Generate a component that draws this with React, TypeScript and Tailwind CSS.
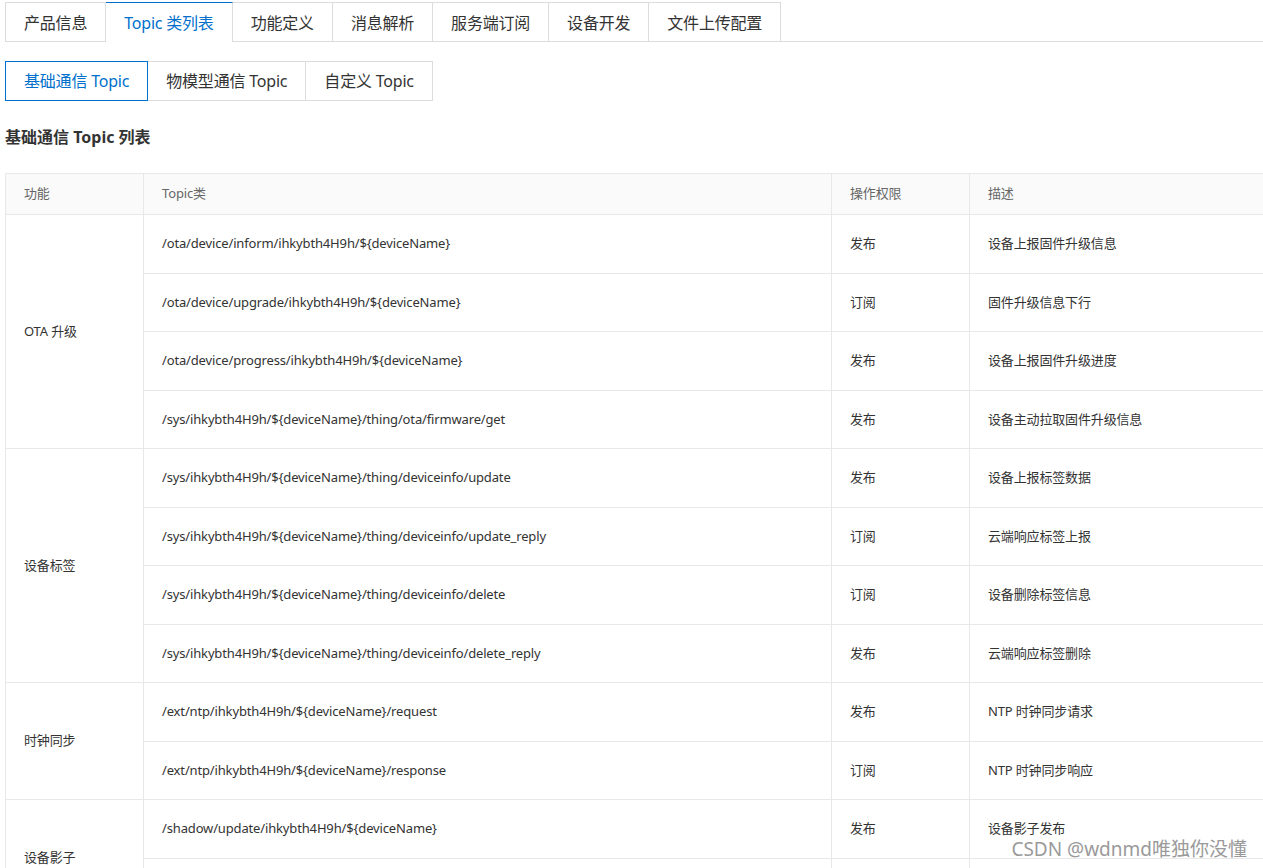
import React from 'react';

const topTabs = ['产品信息', 'Topic 类列表', '功能定义', '消息解析', '服务端订阅', '设备开发', '文件上传配置'];
const subTabs = ['基础通信 Topic', '物模型通信 Topic', '自定义 Topic'];

interface TopicRow {
  topic: string;
  perm: string;
  desc: string;
}

interface TopicGroup {
  name: string;
  rows: TopicRow[];
}

const groups: TopicGroup[] = [
  {
    name: 'OTA 升级',
    rows: [
      { topic: '/ota/device/inform/ihkybth4H9h/${deviceName}', perm: '发布', desc: '设备上报固件升级信息' },
      { topic: '/ota/device/upgrade/ihkybth4H9h/${deviceName}', perm: '订阅', desc: '固件升级信息下行' },
      { topic: '/ota/device/progress/ihkybth4H9h/${deviceName}', perm: '发布', desc: '设备上报固件升级进度' },
      { topic: '/sys/ihkybth4H9h/${deviceName}/thing/ota/firmware/get', perm: '发布', desc: '设备主动拉取固件升级信息' },
    ],
  },
  {
    name: '设备标签',
    rows: [
      { topic: '/sys/ihkybth4H9h/${deviceName}/thing/deviceinfo/update', perm: '发布', desc: '设备上报标签数据' },
      { topic: '/sys/ihkybth4H9h/${deviceName}/thing/deviceinfo/update_reply', perm: '订阅', desc: '云端响应标签上报' },
      { topic: '/sys/ihkybth4H9h/${deviceName}/thing/deviceinfo/delete', perm: '订阅', desc: '设备删除标签信息' },
      { topic: '/sys/ihkybth4H9h/${deviceName}/thing/deviceinfo/delete_reply', perm: '发布', desc: '云端响应标签删除' },
    ],
  },
  {
    name: '时钟同步',
    rows: [
      { topic: '/ext/ntp/ihkybth4H9h/${deviceName}/request', perm: '发布', desc: 'NTP 时钟同步请求' },
      { topic: '/ext/ntp/ihkybth4H9h/${deviceName}/response', perm: '订阅', desc: 'NTP 时钟同步响应' },
    ],
  },
  {
    name: '设备影子',
    rows: [
      { topic: '/shadow/update/ihkybth4H9h/${deviceName}', perm: '发布', desc: '设备影子发布' },
      { topic: '/shadow/get/ihkybth4H9h/${deviceName}', perm: '订阅', desc: '设备影子订阅' },
    ],
  },
];

const App: React.FC = () => {
  return (
    <div
      className="relative min-h-[868px] overflow-hidden bg-white pt-[2px] pl-[5px] text-[#333]"
      style={{ fontFamily: '"Noto Sans", "Noto Sans CJK SC", sans-serif' }}
    >
      {/* Top tabs */}
      <div className="flex border-b border-[#dcdcdc]">
        {topTabs.map((tab, i) => (
          <div
            key={tab}
            className={`-mb-px flex h-[40px] items-center border-r border-t px-[18px] text-[16px] tracking-[-0.2px] ${
              i === 0 ? 'border-l' : ''
            } ${
              i === 1
                ? 'border-r-[#dcdcdc] border-t-[#0070cc] border-l-[#dcdcdc] bg-white text-[#0070cc]'
                : 'border-[#dcdcdc] text-[#333]'
            }`}
          >
            {tab}
          </div>
        ))}
      </div>

      {/* Sub tabs */}
      <div className="mt-[19px] flex">
        {subTabs.map((tab, i) => (
          <div
            key={tab}
            className={`flex h-[40px] items-center border px-[18px] text-[16px] tracking-[-0.2px] ${
              i === 0 ? 'border-[#0070cc] text-[#0070cc]' : 'border-[#dcdcdc] border-l-0 text-[#333]'
            }`}
          >
            {tab}
          </div>
        ))}
      </div>

      <h2 className="mt-[25px] text-[16px] leading-[22px] font-bold text-[#333]">基础通信 Topic 列表</h2>

      {/* Table */}
      <table className="mt-[25px] w-[1300px] table-fixed border-collapse text-[13px] tracking-[-0.15px]">
        <colgroup>
          <col className="w-[138px]" />
          <col className="w-[688px]" />
          <col className="w-[138px]" />
          <col />
        </colgroup>
        <thead>
          <tr className="bg-[#fafafa] text-[#666]">
            <th className="h-[41px] border border-[#e8e8e8] px-[18px] text-left font-normal">功能</th>
            <th className="border border-[#e8e8e8] px-[18px] text-left font-normal">Topic类</th>
            <th className="border border-[#e8e8e8] px-[18px] text-left font-normal">操作权限</th>
            <th className="border border-[#e8e8e8] px-[18px] text-left font-normal">描述</th>
          </tr>
        </thead>
        <tbody>
          {groups.map((group) =>
            group.rows.map((row, i) => (
              <tr key={row.topic}>
                {i === 0 && (
                  <td rowSpan={group.rows.length} className="border border-[#e8e8e8] px-[18px]">
                    {group.name}
                  </td>
                )}
                <td className="h-[58.5px] border border-[#e8e8e8] px-[18px]">{row.topic}</td>
                <td className="border border-[#e8e8e8] px-[18px]">{row.perm}</td>
                <td className="border border-[#e8e8e8] px-[18px]">{row.desc}</td>
              </tr>
            ))
          )}
        </tbody>
      </table>

      {/* Watermark */}
      <div className="absolute right-[16px] top-[835px] text-[19px] leading-[28px] text-[#9a9a9a] [text-shadow:0_0_2px_#fff]">
        CSDN @wdnmd唯独你没懂
      </div>
    </div>
  );
};

export default App;
